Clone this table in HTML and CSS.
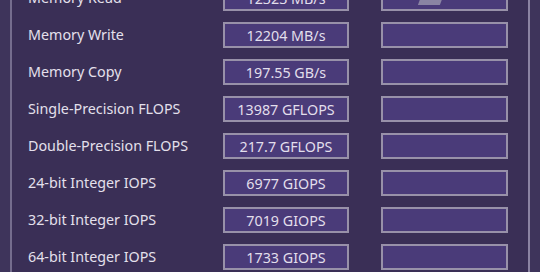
FILE: index.html
```html
<!DOCTYPE html>
<html>
<head>
<meta charset="utf-8">
<link rel="stylesheet" href="styles.css">
</head>
<body>
<div class="frame">
  <div class="rows">
    <div class="row"><span class="label">Memory Read</span><span class="box value">12323 MB/s</span><span class="box empty"><span class="mark"></span></span></div>
    <div class="row"><span class="label">Memory Write</span><span class="box value">12204 MB/s</span><span class="box empty"></span></div>
    <div class="row"><span class="label">Memory Copy</span><span class="box value">197.55 GB/s</span><span class="box empty"></span></div>
    <div class="row"><span class="label">Single-Precision FLOPS</span><span class="box value">13987 GFLOPS</span><span class="box empty"></span></div>
    <div class="row"><span class="label">Double-Precision FLOPS</span><span class="box value">217.7 GFLOPS</span><span class="box empty"></span></div>
    <div class="row"><span class="label">24-bit Integer IOPS</span><span class="box value">6977 GIOPS</span><span class="box empty"></span></div>
    <div class="row"><span class="label">32-bit Integer IOPS</span><span class="box value">7019 GIOPS</span><span class="box empty"></span></div>
    <div class="row"><span class="label">64-bit Integer IOPS</span><span class="box value">1733 GIOPS</span><span class="box empty"></span></div>
  </div>
</div>
</body>
</html>
```
FILE: styles.css
```css
html, body {
  margin: 0;
  padding: 0;
  width: 540px;
  height: 272px;
  overflow: hidden;
  background: #3e345b;
}
.frame {
  margin-left: 10px;
  width: 516px;
  height: 272px;
  border-left: 2px solid #756d8e;
  border-right: 2px solid #8b83a2;
  background: #3a2f56;
  overflow: hidden;
  font-family: "Noto Sans", "Open Sans", sans-serif;
  font-size: 14.3px;
  color: #e4e0ec;
}
.rows {
  margin-top: -15px;
  padding-left: 16px;
}
.row {
  display: grid;
  grid-template-columns: 195px 126px 32px 127px;
  align-items: start;
  height: 37px;
}
.label {
  grid-column: 1;
  white-space: nowrap;
  height: 26px;
  line-height: 26px;
}
.box {
  box-sizing: border-box;
  height: 26px;
  border: 2px solid #9891a9;
  background: #4a3b79;
  display: flex;
  align-items: center;
  justify-content: center;
}
.value {
  grid-column: 2;
  color: #e2dfec;
}
.empty {
  grid-column: 4;
  position: relative;
}
.mark {
  position: absolute;
  left: 36px;
  bottom: 4px;
  width: 22px;
  height: 6px;
  background: #8a84a3;
  transform: skewX(-20deg);
}
```
